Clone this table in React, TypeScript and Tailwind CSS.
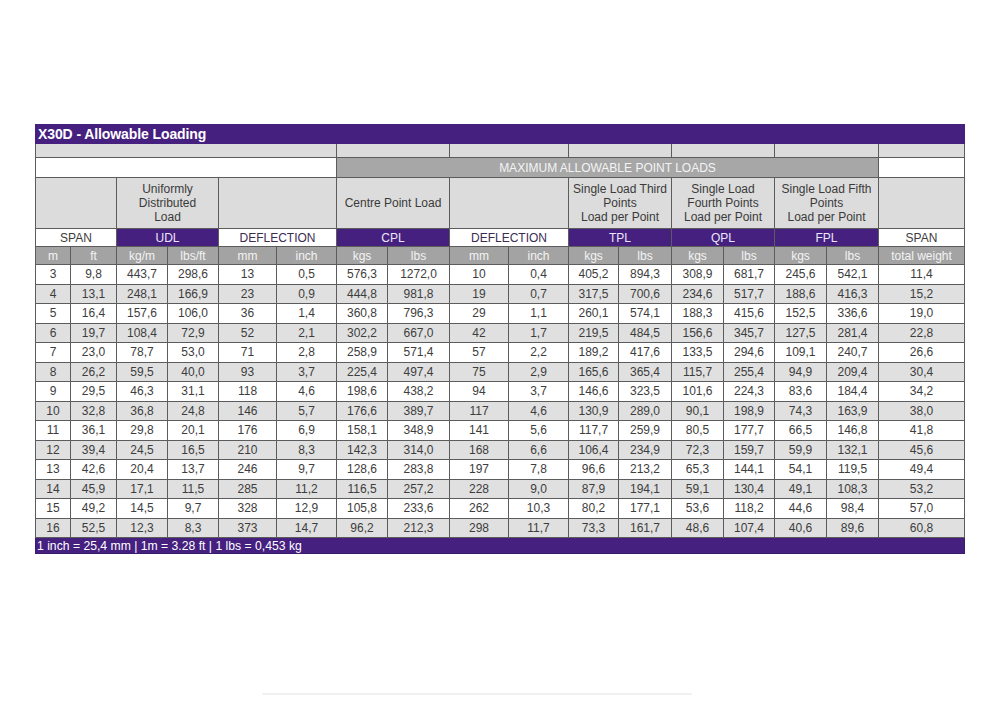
import React from "react";

const widths = [35, 46, 51, 51, 58, 60, 51, 62, 59, 60, 50, 53, 52, 51, 52, 52, 86];

const rows: string[][] = [
    ["3", "9,8", "443,7", "298,6", "13", "0,5", "576,3", "1272,0", "10", "0,4", "405,2", "894,3", "308,9", "681,7", "245,6", "542,1", "11,4"],
    ["4", "13,1", "248,1", "166,9", "23", "0,9", "444,8", "981,8", "19", "0,7", "317,5", "700,6", "234,6", "517,7", "188,6", "416,3", "15,2"],
    ["5", "16,4", "157,6", "106,0", "36", "1,4", "360,8", "796,3", "29", "1,1", "260,1", "574,1", "188,3", "415,6", "152,5", "336,6", "19,0"],
    ["6", "19,7", "108,4", "72,9", "52", "2,1", "302,2", "667,0", "42", "1,7", "219,5", "484,5", "156,6", "345,7", "127,5", "281,4", "22,8"],
    ["7", "23,0", "78,7", "53,0", "71", "2,8", "258,9", "571,4", "57", "2,2", "189,2", "417,6", "133,5", "294,6", "109,1", "240,7", "26,6"],
    ["8", "26,2", "59,5", "40,0", "93", "3,7", "225,4", "497,4", "75", "2,9", "165,6", "365,4", "115,7", "255,4", "94,9", "209,4", "30,4"],
    ["9", "29,5", "46,3", "31,1", "118", "4,6", "198,6", "438,2", "94", "3,7", "146,6", "323,5", "101,6", "224,3", "83,6", "184,4", "34,2"],
    ["10", "32,8", "36,8", "24,8", "146", "5,7", "176,6", "389,7", "117", "4,6", "130,9", "289,0", "90,1", "198,9", "74,3", "163,9", "38,0"],
    ["11", "36,1", "29,8", "20,1", "176", "6,9", "158,1", "348,9", "141", "5,6", "117,7", "259,9", "80,5", "177,7", "66,5", "146,8", "41,8"],
    ["12", "39,4", "24,5", "16,5", "210", "8,3", "142,3", "314,0", "168", "6,6", "106,4", "234,9", "72,3", "159,7", "59,9", "132,1", "45,6"],
    ["13", "42,6", "20,4", "13,7", "246", "9,7", "128,6", "283,8", "197", "7,8", "96,6", "213,2", "65,3", "144,1", "54,1", "119,5", "49,4"],
    ["14", "45,9", "17,1", "11,5", "285", "11,2", "116,5", "257,2", "228", "9,0", "87,9", "194,1", "59,1", "130,4", "49,1", "108,3", "53,2"],
    ["15", "49,2", "14,5", "9,7", "328", "12,9", "105,8", "233,6", "262", "10,3", "80,2", "177,1", "53,6", "118,2", "44,6", "98,4", "57,0"],
    ["16", "52,5", "12,3", "8,3", "373", "14,7", "96,2", "212,3", "298", "11,7", "73,3", "161,7", "48,6", "107,4", "40,6", "89,6", "60,8"],
];

const units = ["m", "ft", "kg/m", "lbs/ft", "mm", "inch", "kgs", "lbs", "mm", "inch", "kgs", "lbs", "kgs", "lbs", "kgs", "lbs", "total weight"];

const cell = "border border-[#5c5c5c] p-0 text-center align-middle";
const purple = "bg-[#45207f] text-[#ece6fb]";

export default function App() {
    return (
        <div className="min-h-[727px] w-[1000px] bg-white pt-[124px] pl-[35px] font-['Liberation_Sans',Arial,sans-serif] text-[12px] leading-[14px] text-[#3d3d3d]">
            <table className="table-fixed border-collapse w-[929px]">
                <colgroup>
                    {widths.map((w, i) => (
                        <col key={i} style={{ width: w }} />
                    ))}
                </colgroup>
                <tbody>
                    {/* title */}
                    <tr className="h-[19px]">
                        <td colSpan={17} className={`${purple} border border-[#45207f] px-[2px] text-left text-[14px] font-bold tracking-[-0.1px] text-white`}>
                            X30D - Allowable Loading
                        </td>
                    </tr>
                    <tr className="h-[14px] bg-[#dcdcdc]">
                        <td colSpan={6} className={cell}></td>
                        <td colSpan={2} className={cell}></td>
                        <td colSpan={2} className={cell}></td>
                        <td colSpan={2} className={cell}></td>
                        <td colSpan={2} className={cell}></td>
                        <td colSpan={2} className={cell}></td>
                        <td className={cell}></td>
                    </tr>
                    <tr className="h-[20px]">
                        <td colSpan={6} className={`${cell} bg-white`}></td>
                        <td colSpan={10} className={`${cell} bg-[#a7a7a7] text-[#f4f4f4]`}>
                            MAXIMUM ALLOWABLE POINT LOADS
                        </td>
                        <td className={`${cell} bg-white`}></td>
                    </tr>
                    {/* descriptions */}
                    <tr className="h-[51px] bg-[#dcdcdc] text-[#3a3a3a]">
                        <td colSpan={2} className={cell}></td>
                        <td colSpan={2} className={cell}>Uniformly<br />Distributed<br />Load</td>
                        <td colSpan={2} className={cell}></td>
                        <td colSpan={2} className={cell}>Centre Point Load</td>
                        <td colSpan={2} className={cell}></td>
                        <td colSpan={2} className={cell}>Single Load Third<br />Points<br />Load per Point</td>
                        <td colSpan={2} className={cell}>Single Load<br />Fourth Points<br />Load per Point</td>
                        <td colSpan={2} className={cell}>Single Load Fifth<br />Points<br />Load per Point</td>
                        <td className={cell}></td>
                    </tr>
                    {/* groups */}
                    <tr className="h-[18px]">
                        <td colSpan={2} className={`${cell} bg-white`}>SPAN</td>
                        <td colSpan={2} className={`${cell} ${purple}`}>UDL</td>
                        <td colSpan={2} className={`${cell} bg-white text-[#3b2c52]`}>DEFLECTION</td>
                        <td colSpan={2} className={`${cell} ${purple}`}>CPL</td>
                        <td colSpan={2} className={`${cell} bg-white text-[#3b2c52]`}>DEFLECTION</td>
                        <td colSpan={2} className={`${cell} ${purple}`}>TPL</td>
                        <td colSpan={2} className={`${cell} ${purple}`}>QPL</td>
                        <td colSpan={2} className={`${cell} ${purple}`}>FPL</td>
                        <td className={`${cell} bg-white`}>SPAN</td>
                    </tr>
                    {/* units */}
                    <tr className="h-[18px] bg-[#a3a3a3] text-[#f3f3f3]">
                        {units.map((u, i) => (
                            <td key={i} className={`${cell} whitespace-nowrap`}>{u}</td>
                        ))}
                    </tr>
                    {rows.map((r, ri) => (
                        <tr key={ri} className={`h-[19.5px] ${ri % 2 === 0 ? "bg-white" : "bg-[#e0e0e0]"}`}>
                            {r.map((v, ci) => (
                                <td key={ci} className={cell}>{v}</td>
                            ))}
                        </tr>
                    ))}
                    <tr className="h-[16px]">
                        <td colSpan={17} className={`${purple} border border-[#3a1a6a] px-[1px] text-left text-[12.2px] text-white`}>
                            1 inch = 25,4 mm | 1m = 3.28 ft | 1 lbs = 0,453 kg
                        </td>
                    </tr>
                </tbody>
            </table>

            {/* faint rule near the bottom */}
            <div className="mt-[139px] ml-[227px] h-[2px] w-[430px] bg-[#f1f1f1]" />
        </div>
    );
}
